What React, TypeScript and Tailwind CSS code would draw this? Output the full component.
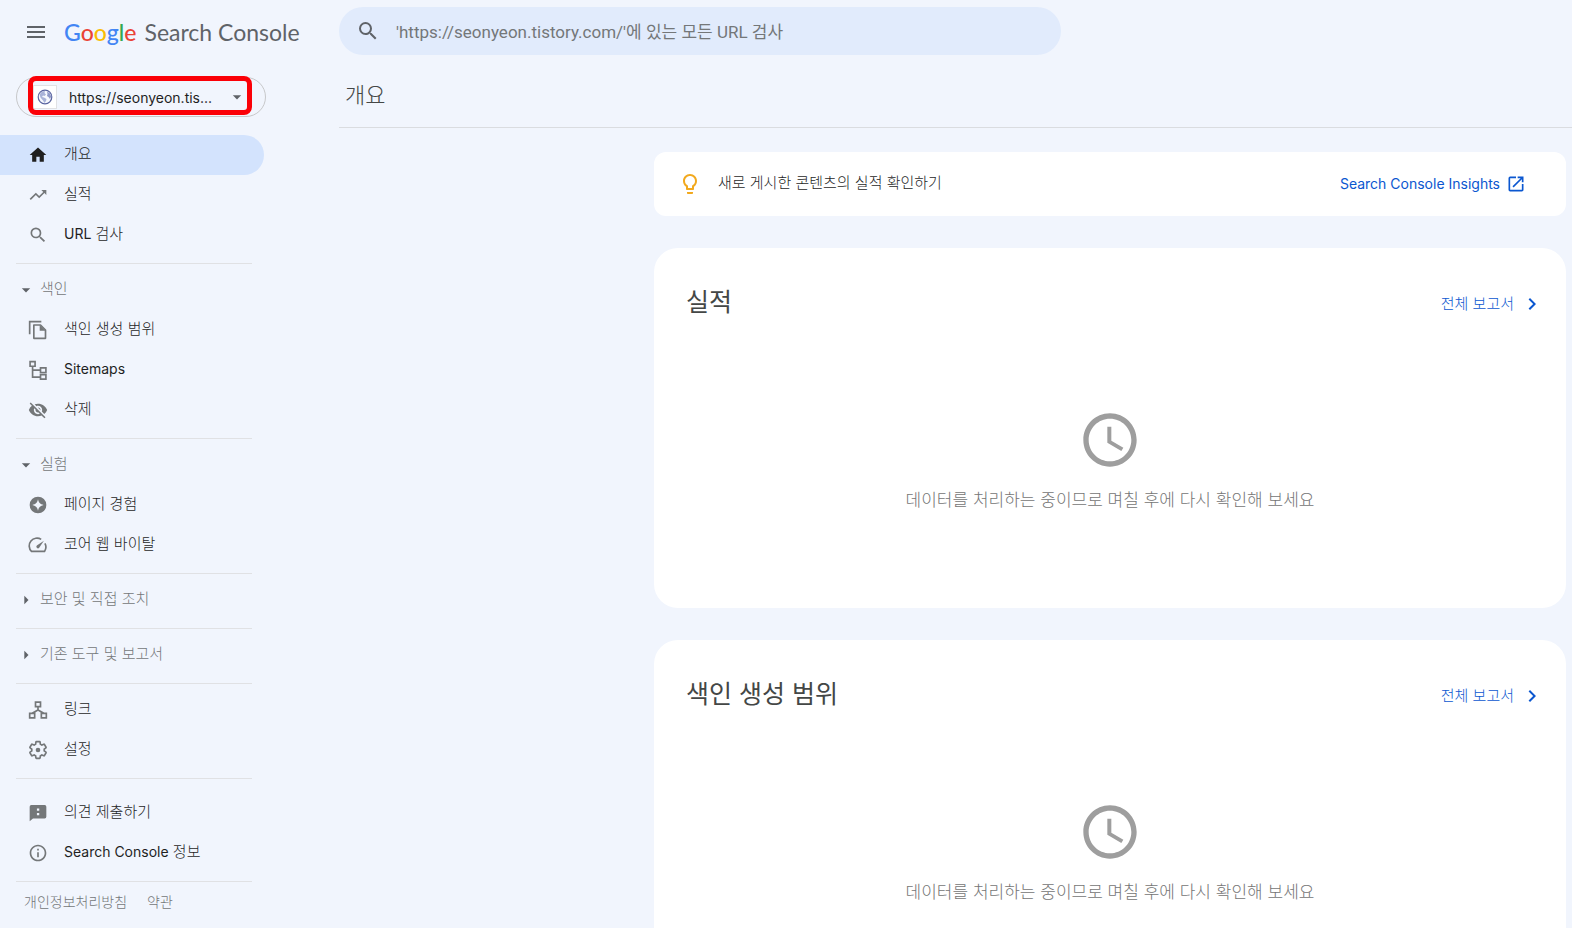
import type { ReactNode } from "react";
import {
  MdArrowDropDown,
  MdArrowRight,
  MdAccessTime,
  MdChevronRight,
  MdHome,
  MdInfoOutline,
  MdLightbulbOutline,
  MdMenu,
  MdOpenInNew,
  MdSearch,
  MdTrendingUp,
  MdVisibilityOff,
} from "react-icons/md";

const GEAR =
  "M19.43 12.98c.04-.32.07-.64.07-.98 0-.34-.03-.66-.07-.98l2.11-1.65c.19-.15.24-.42.12-.64l-2-3.46c-.09-.16-.26-.25-.44-.25-.06 0-.12.01-.17.03l-2.49 1c-.52-.4-1.08-.73-1.69-.98l-.38-2.65C14.46 2.18 14.25 2 14 2h-4c-.25 0-.46.18-.49.42l-.38 2.65c-.61.25-1.17.59-1.69.98l-2.49-1c-.06-.02-.12-.03-.18-.03-.17 0-.34.09-.43.25l-2 3.46c-.13.22-.07.49.12.64l2.11 1.65c-.04.32-.07.65-.07.98 0 .33.03.66.07.98l-2.11 1.65c-.19.15-.24.42-.12.64l2 3.46c.09.16.26.25.44.25.06 0 .12-.01.17-.03l2.49-1c.52.4 1.08.73 1.69.98l.38 2.65c.03.24.24.42.49.42h4c.25 0 .46-.18.49-.42l.38-2.65c.61-.25 1.17-.59 1.69-.98l2.49 1c.06.02.12.03.18.03.17 0 .34-.09.43-.25l2-3.46c.12-.22.07-.49-.12-.64l-2.11-1.65z";

function Glyph({ children }: { children: ReactNode }) {
  return (
    <svg className="size-5" viewBox="0 0 24 24" fill="none" stroke="currentColor" strokeWidth="2" aria-hidden="true">
      {children}
    </svg>
  );
}

const PagesIcon = () => (
  <Glyph>
    <path d="M2 17V2h14" />
    <path d="M7 6h8l6 6v10H7z" strokeLinejoin="round" />
    <path d="M14 6v7h7z" fill="currentColor" stroke="none" />
  </Glyph>
);

const SitemapIcon = () => (
  <Glyph>
    <path d="M2.500 2h6v5.500h-6zM15 9.500h6.500V15H15zM15 17.500h6.500V23H15zM5.500 7.500v13H15M5.500 12.200H15" />
  </Glyph>
);

const PageExperienceIcon = () => (
  <Glyph>
    <path
      d="M12 2a10 10 0 1 0 0 20 10 10 0 0 0 0-20zm0 3.200c.9 4.200 2.600 5.900 6.800 6.800-4.200.9-5.900 2.600-6.800 6.800-.9-4.200-2.600-5.900-6.800-6.800 4.200-.9 5.900-2.600 6.800-6.800z"
      fill="currentColor"
      stroke="none"
      fillRule="evenodd"
    />
  </Glyph>
);

const SpeedIcon = () => (
  <Glyph>
    <path d="M15.800 5.300A9.300 9.300 0 0 0 4.200 19.700h15.600a9.300 9.300 0 0 0 .5-9.700" strokeLinejoin="round" />
    <path d="M10.600 15.400a2 2 0 0 0 2.800 0l5.700-8.500-8.500 5.700a2 2 0 0 0 0 2.800z" fill="currentColor" stroke="none" />
  </Glyph>
);

const LinksIcon = () => (
  <Glyph>
    <path d="M9 2.500h6V8H9zM2 16h6v5.500H2zM16 16h6v5.500h-6zM12 8v4.500M5 16l7-4 7 4" />
  </Glyph>
);

const SettingsIcon = () => (
  <Glyph>
    <path d={GEAR} />
    <circle cx="12" cy="12" r="2.800" fill="currentColor" stroke="none" />
  </Glyph>
);

const FeedbackIcon = () => (
  <Glyph>
    <path
      d="M20 2.500H4a2 2 0 0 0-2 2V22l4-3.500h14a2 2 0 0 0 2-2v-12a2 2 0 0 0-2-2zM10.700 6.500h2.800v2.800h-2.800zM10.700 12h2.800v2.800h-2.800z"
      fill="currentColor"
      stroke="none"
      fillRule="evenodd"
    />
  </Glyph>
);

const GlobeIcon = () => (
  <svg className="size-4" viewBox="0 0 16 16" fill="none" aria-hidden="true">
    <circle cx="8" cy="8" r="6.800" fill="#f6f8fd" stroke="#5a64a0" strokeWidth="1.200" />
    <path d="M2.500 5.500L5 2.500l3-.5-.5 2L9 5.500 7.500 7 6 6.500 5 8l2 .5L9.500 10 9 12l-1.500 2L6 11.500 3.500 8.500z" fill="#a9b3d8" />
    <path d="M10 2.500l3 2 1.200 3-1.200 2.500-1.500-2-1.500-1 .5-2z" fill="#8f99c8" />
  </svg>
);

function NavItem({ icon, label, active = false }: { icon: ReactNode; label: ReactNode; active?: boolean }) {
  return (
    <a
      href="#"
      className={
        active
          ? "flex h-10 w-[264px] items-center gap-4 rounded-r-full bg-[#d3e3fd] pl-7 text-[#1f1f1f]"
          : "flex h-10 w-[264px] items-center gap-4 rounded-r-full pl-7 text-[#747779]"
      }
    >
      <span className="shrink-0">{icon}</span>
      <span className="pb-[2px] text-[15px] leading-5 text-[#1f1f1f]">{label}</span>
    </a>
  );
}

function NavHeading({ label, open = false }: { label: string; open?: boolean }) {
  return (
    <button type="button" aria-expanded={open} className="flex h-10 w-[264px] items-center gap-1 pl-4 text-[#5f6368]">
      {open ? <MdArrowDropDown className="size-5" /> : <MdArrowRight className="size-5" />}
      <span className="pb-[2px] text-[15px] leading-5 text-[#747779]">{label}</span>
    </button>
  );
}

const Divider = () => <hr className="mt-2 mr-[87px] mb-[6px] ml-4 border-[#e0e1e4]" />;

const Latin = ({ children }: { children: ReactNode }) => <span className="text-sm font-normal">{children}</span>;

function ReportCard({ title }: { title: string }) {
  return (
    <section className="flex h-[360px] shrink-0 flex-col rounded-3xl bg-white">
      <div className="flex items-center justify-between pt-9 pr-[22px] pl-8">
        <h2 className="text-[25px] leading-9 font-normal text-[#444746]">{title}</h2>
        <a href="#" className="flex items-center gap-[6px] pt-1 text-[15px] leading-5 text-[#0b57d0]">
          전체 보고서
          <MdChevronRight className="size-6" />
        </a>
      </div>
      <div className="flex flex-col items-center gap-4 pt-[88px] text-[#757575]">
        <MdAccessTime className="size-16 text-[#9e9e9e]" />
        <p className="text-[17px] leading-6">데이터를 처리하는 중이므로 며칠 후에 다시 확인해 보세요</p>
      </div>
    </section>
  );
}

export default function App() {
  return (
    <div className="flex h-screen overflow-hidden bg-[#f1f5fd] font-['Inter','Noto_Sans_CJK_KR',sans-serif] font-light">
      <aside className="w-[339px] shrink-0">
        <div className="flex h-16 items-center gap-4 pl-6">
          <button type="button" aria-label="메뉴" className="text-[#5f6368]">
            <MdMenu className="size-6" />
          </button>
          <a href="#" className="flex items-baseline gap-2 font-['Lato',sans-serif] text-[23px] font-normal text-[#5f6368]">
            <span className="font-medium">
              <span className="text-[#4285f4]">G</span>
              <span className="text-[#ea4335]">o</span>
              <span className="text-[#fbbc04]">o</span>
              <span className="text-[#4285f4]">g</span>
              <span className="text-[#34a853]">l</span>
              <span className="text-[#ea4335]">e</span>
            </span>
            <span>Search Console</span>
          </a>
        </div>
        <div className="relative mt-[13px] mb-[18px] ml-4 w-[250px]">
          <button
            type="button"
            className="flex h-10 w-full items-center rounded-full border border-[#c7c8ca] pr-[18px] pl-4 text-[#5f6368]"
          >
            <span className="mr-3 flex size-6 items-center justify-center border border-[#e0e1e4] bg-white">
              <GlobeIcon />
            </span>
            <span className="flex-1 truncate pt-[2px] text-left text-sm font-normal text-[#1f1f1f]">
              https://seonyeon.tis...
            </span>
            <MdArrowDropDown className="size-5" />
          </button>
          <div className="pointer-events-none absolute -top-px left-3 h-[39px] w-56 rounded-lg border-[5px] border-[#fb0007]" />
        </div>
        <nav>
          <NavItem active icon={<MdHome className="size-5" />} label="개요" />
          <NavItem icon={<MdTrendingUp className="size-5" />} label="실적" />
          <NavItem icon={<MdSearch className="size-5" />} label={<><Latin>URL</Latin> 검사</>} />
          <Divider />
          <NavHeading open label="색인" />
          <NavItem icon={<PagesIcon />} label="색인 생성 범위" />
          <NavItem icon={<SitemapIcon />} label={<Latin>Sitemaps</Latin>} />
          <NavItem icon={<MdVisibilityOff className="size-5" />} label="삭제" />
          <Divider />
          <NavHeading open label="실험" />
          <NavItem icon={<PageExperienceIcon />} label="페이지 경험" />
          <NavItem icon={<SpeedIcon />} label="코어 웹 바이탈" />
          <Divider />
          <NavHeading label="보안 및 직접 조치" />
          <Divider />
          <NavHeading label="기존 도구 및 보고서" />
          <Divider />
          <NavItem icon={<LinksIcon />} label="링크" />
          <NavItem icon={<SettingsIcon />} label="설정" />
          <Divider />
          <div className="pt-2">
            <NavItem icon={<FeedbackIcon />} label="의견 제출하기" />
            <NavItem icon={<MdInfoOutline className="size-5" />} label={<><Latin>Search Console</Latin> 정보</>} />
          </div>
          <Divider />
        </nav>
        <footer className="flex gap-5 pt-1 pl-6 text-sm text-[#747779]">
          <a href="#">개인정보처리방침</a>
          <a href="#">약관</a>
        </footer>
      </aside>
      <main className="flex min-w-0 flex-1 flex-col pt-[7px]">
        <label className="flex h-12 w-[722px] shrink-0 items-center gap-4 rounded-full bg-[#e1ebfc] pr-4 pl-[17px] text-[#5f6368]">
          <MdSearch className="size-6 shrink-0" />
          <input
            type="text"
            aria-label="URL 검사"
            placeholder="'https://seonyeon.tistory.com/'에 있는 모든 URL 검사"
            className="min-w-0 flex-1 bg-transparent pt-1 font-['Roboto','Noto_Sans_CJK_KR',sans-serif] text-[17px] font-normal outline-none placeholder:text-[#747779]"
          />
        </label>
        <h1 className="shrink-0 border-b border-[#dadce0] pt-6 pb-4 pl-[6px] text-[22px] leading-8 text-[#444746]">개요</h1>
        <div className="flex flex-col gap-8 pt-6 pr-[6px] pl-[315px]">
          <section className="flex h-16 shrink-0 items-center rounded-xl bg-white pr-10 pl-6 text-[15px] leading-5">
            <MdLightbulbOutline className="size-6 text-[#f2a91e]" />
            <p className="flex-1 pb-[2px] pl-4 text-[#1f1f1f]">새로 게시한 콘텐츠의 실적 확인하기</p>
            <a href="#" className="flex items-center gap-[6px] text-sm font-normal text-[#0b57d0]">
              Search Console Insights
              <MdOpenInNew className="size-5" />
            </a>
          </section>
          <ReportCard title="실적" />
          <ReportCard title="색인 생성 범위" />
        </div>
      </main>
    </div>
  );
}
